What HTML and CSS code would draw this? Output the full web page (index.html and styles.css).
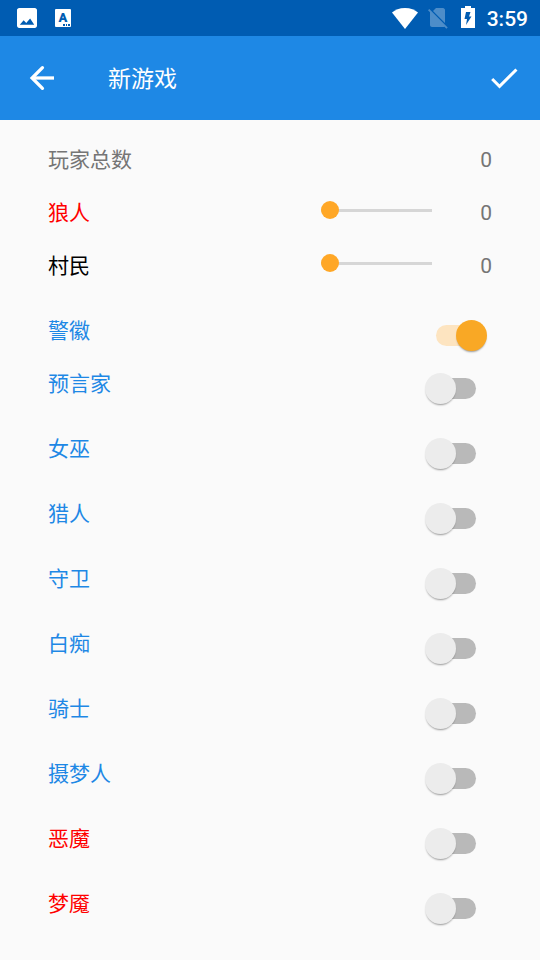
FILE: index.html
```html
<!DOCTYPE html>
<html lang="zh-CN">
<head>
<meta charset="utf-8">
<meta name="viewport" content="width=device-width, initial-scale=1">
<title>新游戏</title>
<link rel="stylesheet" href="styles.css">
</head>
<body>
<div class="status-bar">
  <div class="status-group notifications">
    <svg width="20" height="20" viewBox="3 3 18 18" aria-hidden="true"><path fill="#fff" d="M21 19V5c0-1.100-.9-2-2-2H5c-1.100 0-2 .9-2 2v14c0 1.100.9 2 2 2h14c1.100 0 2-.9 2-2zM9 14l2.300 2.500L14.800 12.500l3.700 5.500H5.500z"/></svg>
    <svg width="16" height="18" viewBox="0 0 16 18" aria-hidden="true"><rect width="16" height="18" rx="1" fill="#fff"/><text class="keyboard-letter" x="8" y="13" text-anchor="middle">A</text><path fill="#005cb2" d="M8 15h2v2H8zM11 15h1v2h-1zM13 15h2v2h-2z"/></svg>
  </div>
  <div class="status-group">
    <svg width="26" height="21" viewBox="0 0 26 21" aria-hidden="true"><path fill="#fff" d="M13 21L0 4.500C3 2 7.500 0 13 0s10 2 13 4.500z"/></svg>
    <svg class="no-sim" width="20" height="21" viewBox="0 0 20 21" aria-hidden="true"><path fill="#fff" d="M17 2c0-1-1-2-2-2H8L5 3l12 12zM1.300 1L0 2.300l2 2V17c0 1 1 2 2 2h11q1 0 1.400-.3l2 2 1.300-1.300z"/></svg>
    <svg class="battery" width="14" height="22" viewBox="0 0 14 22" aria-hidden="true"><path fill="#fff" fill-rule="evenodd" d="M4 0h6v2h4v20H0V2h4zM9.500 6H5L3.500 13H6l-1 6 5.500-8.500H8z"/></svg>
    <span class="clock">3:59</span>
  </div>
</div>
<header class="app-bar">
  <button class="icon-button" type="button" aria-label="返回"><svg width="36" height="36" viewBox="0 0 24 24" aria-hidden="true"><path fill="none" stroke="#fff" stroke-width="2.200" d="M20 12H5.500"/><path fill="none" stroke="#fff" stroke-width="2.200" stroke-linecap="round" d="M12.300 5.100L5.400 12l6.900 6.900"/></svg></button>
  <h1 class="title">新游戏</h1>
  <button class="icon-button" type="button" aria-label="确定"><svg width="36" height="36" viewBox="0 0 24 24" aria-hidden="true"><path fill="#fff" d="M9 16.170L4.830 12l-1.420 1.410L9 19 21 7l-1.410-1.410z"/></svg></button>
</header>
<main class="settings">
  <div class="counts">
    <div class="count-row"><span class="name">玩家总数</span><output class="value">0</output></div>
    <div class="count-row"><label class="name evil" for="wolves">狼人</label><input class="slider" id="wolves" type="range" min="0" max="10" value="0"><output class="value" for="wolves">0</output></div>
    <div class="count-row"><label class="name plain" for="villagers">村民</label><input class="slider" id="villagers" type="range" min="0" max="10" value="0"><output class="value" for="villagers">0</output></div>
  </div>
  <div class="toggle-row badge-row"><label class="role" for="badge">警徽</label><input class="switch" id="badge" type="checkbox" role="switch" checked></div>
  <div class="roles">
    <div class="toggle-row"><label class="role" for="seer">预言家</label><input class="switch" id="seer" type="checkbox" role="switch"></div>
    <div class="toggle-row"><label class="role" for="witch">女巫</label><input class="switch" id="witch" type="checkbox" role="switch"></div>
    <div class="toggle-row"><label class="role" for="hunter">猎人</label><input class="switch" id="hunter" type="checkbox" role="switch"></div>
    <div class="toggle-row"><label class="role" for="guard">守卫</label><input class="switch" id="guard" type="checkbox" role="switch"></div>
    <div class="toggle-row"><label class="role" for="idiot">白痴</label><input class="switch" id="idiot" type="checkbox" role="switch"></div>
    <div class="toggle-row"><label class="role" for="knight">骑士</label><input class="switch" id="knight" type="checkbox" role="switch"></div>
    <div class="toggle-row"><label class="role" for="dreamer">摄梦人</label><input class="switch" id="dreamer" type="checkbox" role="switch"></div>
    <div class="toggle-row"><label class="role evil" for="demon">恶魔</label><input class="switch" id="demon" type="checkbox" role="switch"></div>
    <div class="toggle-row"><label class="role evil" for="nightmare">梦魇</label><input class="switch" id="nightmare" type="checkbox" role="switch"></div>
  </div>
</main>
</body>
</html>
```
FILE: styles.css
```css
* {
  box-sizing: border-box;
}

body {
  margin: 0;
  background: #fafafa;
  color: #757575;
  font-family: Roboto, "Noto Sans CJK SC", sans-serif;
  font-size: 21px;
}

svg {
  display: block;
  flex: none;
}

.status-bar {
  display: flex;
  justify-content: space-between;
  align-items: center;
  height: 36px;
  padding: 0 12px 0 17px;
  background: #005cb2;
  color: #fff;
}

.status-group {
  display: flex;
  align-items: center;
  gap: 10px;
}

.notifications {
  gap: 18px;
}

.keyboard-letter {
  fill: #005cb2;
  font-size: 13px;
  font-weight: 900;
}

.no-sim {
  opacity: 0.3;
}

.battery {
  margin: 0 2px 2px 3px;
}

.clock {
  padding-top: 2px;
  font-weight: 500;
  line-height: 34px;
}

.app-bar {
  display: flex;
  align-items: center;
  height: 84px;
  padding: 0 18px 0 24px;
  background: #1e88e5;
  color: #fff;
}

.icon-button {
  padding: 0;
  border: 0;
  background: none;
  cursor: pointer;
}

.title {
  flex: 1;
  margin: 0 0 0 48px;
  padding-top: 4px;
  font-size: 23px;
  font-weight: 400;
  line-height: 36px;
}

.settings {
  padding: 14px 48px 24px;
}

.count-row {
  display: flex;
  align-items: flex-start;
  height: 53px;
  line-height: 53px;
}

.name {
  flex: 1;
}

.plain {
  color: #000;
}

.evil,
.role.evil {
  color: #f00;
}

.value {
  width: 60px;
  text-align: right;
}

.slider {
  flex: 0 0 25%;
  min-width: 0;
  height: 47px;
  margin: 0;
  appearance: none;
  background: none;
}

.slider::-webkit-slider-runnable-track {
  height: 3px;
  background: #d6d6d6;
}

.slider::-webkit-slider-thumb {
  width: 18px;
  height: 18px;
  margin-top: -8px;
  border-radius: 50%;
  appearance: none;
  background: #ffa726;
}

.toggle-row {
  display: flex;
  align-items: flex-start;
  justify-content: space-between;
}

.badge-row {
  margin: 22px 0 12px;
}

.roles {
  display: grid;
  gap: 24px;
}

.role {
  color: #1e88e5;
  line-height: 33px;
}

.switch {
  position: relative;
  width: 40px;
  height: 21px;
  margin: 10px 16px;
  border-radius: 11px;
  appearance: none;
  background: #b9b9b9;
  cursor: pointer;
}

.switch::before {
  content: "";
  position: absolute;
  top: -5px;
  left: -11px;
  width: 31px;
  height: 31px;
  border-radius: 50%;
  background: #ececec;
  box-shadow: 0 2px 2px -1px rgba(0, 0, 0, 0.4);
}

.switch:checked {
  background: #fde4c0;
}

.switch:checked::before {
  left: 20px;
  background: #f9a825;
}
```
